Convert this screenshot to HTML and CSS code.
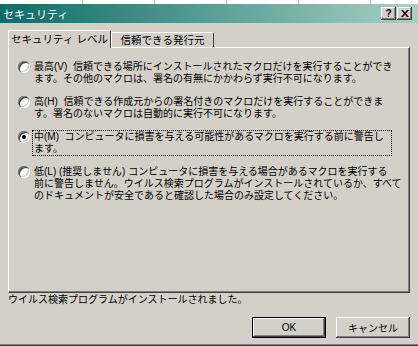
FILE: index.html
```html
<!DOCTYPE html>
<html lang="ja">
<head>
  <meta charset="UTF-8">
  <title>セキュリティ</title>
  <link rel="stylesheet" href="styles.css">
</head>
<body>
  <div class="sheet">
    <span class="cell first"></span>
    <span class="cell"></span>
    <span class="cell"></span>
    <span class="cell"></span>
    <span class="cell"></span>
  </div>

  <div class="window">
    <div class="titlebar">
      <span class="title">セキュリティ</span>
      <div class="caption-btns">
        <span class="cbtn">?</span>
        <span class="cbtn">
          <svg width="8" height="7" viewBox="0 0 8 7"><path d="M0 0h2l2 2.5L6 0h2L5 3.5 8 7H6L4 4.5 2 7H0l3-3.5z" fill="#000"/></svg>
        </span>
      </div>
    </div>

    <div class="content">
      <div class="tabs">
        <div class="tab active">セキュリティ レベル</div>
        <div class="tab">信頼できる発行元</div>
      </div>

      <div class="panel">
        <div class="option">
          <span class="radio"></span>
          <div class="label">最高(V)&nbsp;&nbsp;信頼できる場所にインストールされたマクロだけを実行することができ<br>ます。その他のマクロは、署名の有無にかかわらず実行不可になります。</div>
        </div>
        <div class="option">
          <span class="radio"></span>
          <div class="label">高(H)&nbsp;&nbsp;信頼できる作成元からの署名付きのマクロだけを実行することができま<br>す。署名のないマクロは自動的に実行不可になります。</div>
        </div>
        <div class="option">
          <span class="radio checked"></span>
          <div class="label focused">中(M)&nbsp;&nbsp;コンピュータに損害を与える可能性があるマクロを実行する前に警告し<br>ます。</div>
        </div>
        <div class="option">
          <span class="radio"></span>
          <div class="label">低(L)&nbsp;(推奨しません)&nbsp;コンピュータに損害を与える場合があるマクロを実行する<br>前に警告しません。ウイルス検索プログラムがインストールされているか、すべて<br>のドキュメントが安全であると確認した場合のみ設定してください。</div>
        </div>
      </div>

      <div class="status">ウイルス検索プログラムがインストールされました。</div>

      <div class="buttons">
        <button class="btn default">OK</button>
        <button class="btn">キャンセル</button>
      </div>
    </div>
  </div>
</body>
</html>
```

FILE: styles.css
```css
body {
  margin: 0;
  width: 418px;
  height: 346px;
  overflow: hidden;
  background-color: #d4d0c8;
  font-family: "Liberation Sans", "Noto Sans CJK JP", sans-serif;
  font-size: 10px;
  color: #000;
}

.sheet {
  display: flex;
  height: 4px;
  background-color: #fff;
}
.cell {
  flex: none;
  width: 71px;
  border-right: 1px solid #b8b8b8;
}
.cell.first {
  width: 82px;
}

.window {
  height: 342px;
  box-sizing: border-box;
  box-shadow: inset 0 -1px 0 #404040, inset 0 -2px 0 #808080;
}

.titlebar {
  height: 19px;
  display: flex;
  align-items: center;
  justify-content: space-between;
  padding: 0 6px 0 3px;
  background: linear-gradient(to right, #0b6c67, #5fa39a 55%, #a9cfc4);
  color: #fff;
  font-size: 11px;
}
.caption-btns {
  display: flex;
  gap: 1px;
}
.cbtn {
  width: 15px;
  height: 13px;
  display: flex;
  align-items: center;
  justify-content: center;
  background-color: #d4d0c8;
  box-shadow: inset -1px -1px 0 #404040, inset 1px 1px 0 #fff, inset -2px -2px 0 #808080;
  font-weight: bold;
  font-size: 10px;
  line-height: 13px;
  color: #000;
}

.content {
  padding: 7px 8px 0 8px;
}

.tabs {
  display: flex;
  align-items: flex-end;
  height: 17px;
}
.tab {
  width: 103px;
  height: 15px;
  box-sizing: border-box;
  border: 1px solid;
  border-color: #fff #404040 transparent #fff;
  border-bottom: none;
  border-radius: 2px 2px 0 0;
  text-align: center;
  font-size: 10.5px;
  line-height: 14px;
}
.tab.active {
  height: 18px;
  margin-bottom: -1px;
  position: relative;
  z-index: 1;
  background-color: #d4d0c8;
  line-height: 17px;
}

.panel {
  height: 246px;
  box-sizing: border-box;
  border: 1px solid;
  border-color: #fff #404040 #404040 #fff;
  box-shadow: inset -1px -1px 0 #808080;
  padding: 12px 0 0 9px;
}

.option {
  display: flex;
  gap: 2px;
  margin-bottom: 9px;
}
.radio {
  flex: none;
  width: 12px;
  height: 12px;
  margin-top: 1px;
  box-sizing: border-box;
  border-radius: 50%;
  background-color: #fff;
  box-shadow: inset 1px 1px 0 #808080, inset 2px 2px 0 #404040, inset -1px -1px 0 #fff, inset -2px -2px 0 #d4d0c8;
  display: flex;
  align-items: center;
  justify-content: center;
}
.radio.checked::after {
  content: "";
  width: 4px;
  height: 4px;
  border-radius: 50%;
  background-color: #000;
}
.label {
  width: 360px;
  box-sizing: border-box;
  padding: 0 1px;
  border: 1px solid transparent;
  line-height: 12px;
  white-space: nowrap;
}
.label.focused {
  border: 1px dotted #000;
}

.status {
  margin-top: 1px;
  line-height: 12px;
}

.buttons {
  display: flex;
  justify-content: flex-end;
  gap: 10px;
  margin-top: 11px;
}
.btn {
  width: 74px;
  height: 21px;
  padding: 0;
  border: none;
  background-color: #d4d0c8;
  font-family: inherit;
  font-size: 10px;
  color: #000;
  box-shadow: inset -1px -1px 0 #404040, inset 1px 1px 0 #fff, inset -2px -2px 0 #808080;
}
.btn.default {
  border: 1px solid #000;
}
```
